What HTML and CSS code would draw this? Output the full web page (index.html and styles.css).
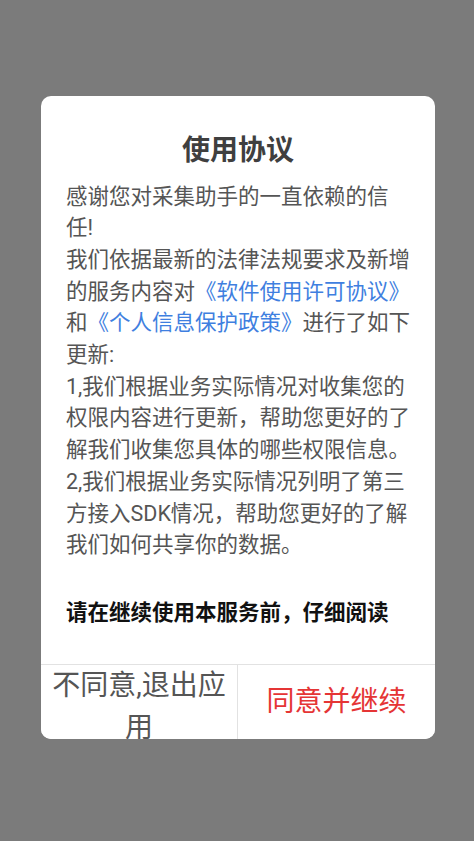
FILE: index.html
```html
<!DOCTYPE html>
<html lang="zh-CN">
  <head>
    <meta charset="UTF-8" />
    <meta name="viewport" content="width=device-width, initial-scale=1.0" />
    <title>使用协议</title>
    <link rel="stylesheet" href="styles.css">
  </head>
  <body>
    <div class="dialog">
      <h3 class="title">使用协议</h3>
      <div class="content">
        <p>
          感谢您对采集助手的一直依赖的信任!<br />
          我们依据最新的法律法规要求及新增的服务内容对<a href="#">《软件使用许可协议》</a>和<a href="#">《个人信息保护政策》</a>进行了如下更新:<br />
          1,我们根据业务实际情况对收集您的权限内容进行更新，帮助您更好的了解我们收集您具体的哪些权限信息。<br />
          2,我们根据业务实际情况列明了第三方接入SDK情况，帮助您更好的了解我们如何共享你的数据。
        </p>
        <p class="notice">请在继续使用本服务前，仔细阅读</p>
      </div>
      <div class="actions">
        <button class="btn disagree">不同意,退出应用</button>
        <button class="btn agree">同意并继续</button>
      </div>
    </div>
  </body>
</html>
```

FILE: styles.css
```css
html,
body {
  height: 100%;
}
body {
  font-family: Roboto, "Noto Sans CJK SC", sans-serif;
  background-color: #7b7b7b;
  margin: 0;
  padding: 96px 0 0 41px;
  box-sizing: border-box;
}
.dialog {
  width: 394px;
  background: #fff;
  border-radius: 10px;
  overflow: hidden;
}
.title {
  margin: 0;
  padding-top: 35px;
  line-height: 40px;
  height: 40px;
  font-size: 28px;
  font-weight: bold;
  color: #3f3f3f;
  text-align: center;
}
.content {
  padding: 9.5px 24px 35px 25px;
  font-size: 21.5px;
  line-height: 31.7px;
  color: #555;
}
.content p {
  margin: 0;
  width: 345px;
}
.content a {
  color: #3f7fe0;
  text-decoration: none;
}
.notice {
  margin-top: 36px !important;
  font-weight: bold;
  color: #111;
}
.actions {
  display: flex;
  height: 74px;
  border-top: 1px solid #e2e2e2;
}
.btn {
  width: 50%;
  flex: none;
  box-sizing: border-box;
  margin: 0;
  padding: 0;
  border: none;
  background: #fff;
  font-family: inherit;
  font-size: 28px;
  cursor: pointer;
  overflow: hidden;
}
.disagree {
  color: #555;
  line-height: 42px;
  padding: 0 8px;
  align-self: flex-start;
  height: 74px;
  border-right: 1px solid #e2e2e2;
}
.agree {
  color: #e53535;
  line-height: 74px;
}
```
